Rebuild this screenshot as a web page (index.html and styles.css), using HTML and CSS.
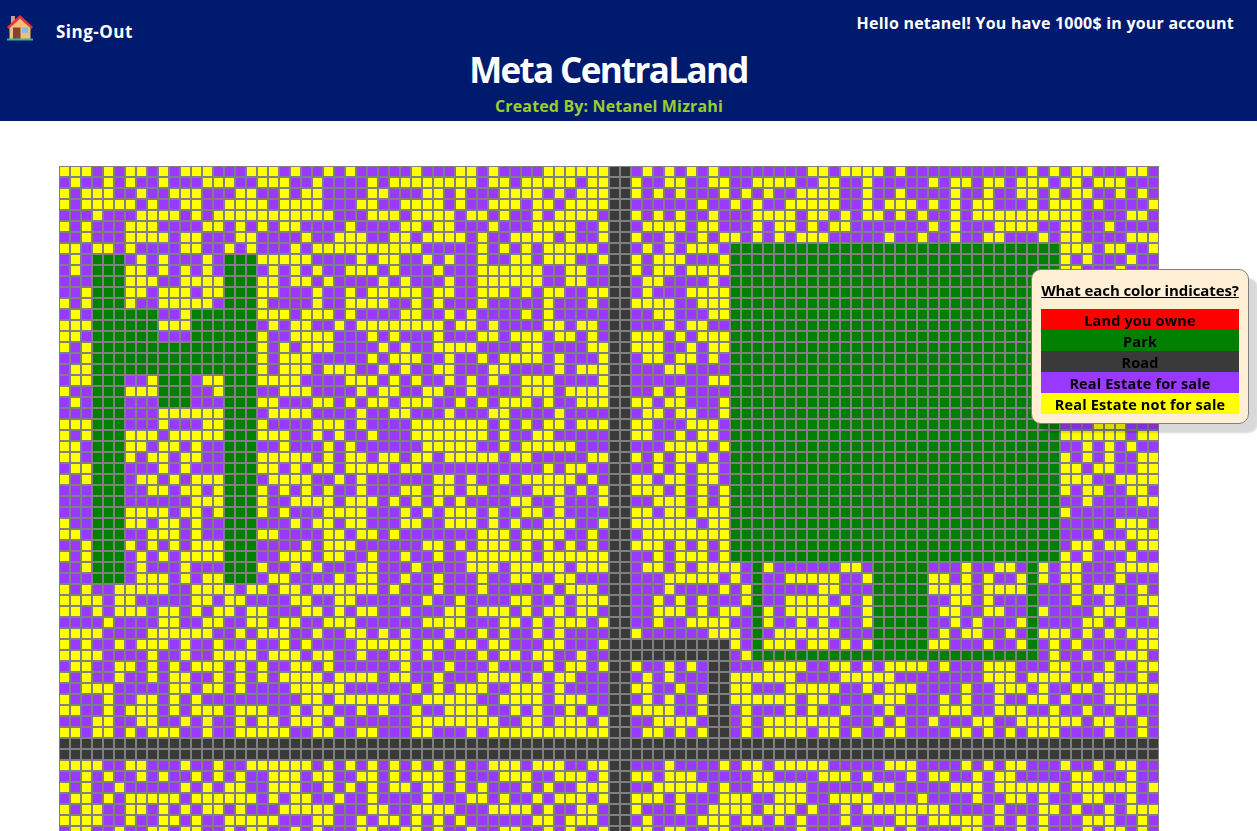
FILE: index.html
```html
<!DOCTYPE html>
<html lang="en">
<head>
<meta charset="utf-8">
<title>Meta CentraLand</title>
<link rel="stylesheet" href="styles.css">
</head>
<body>
<header class="header">
  <nav class="nav">
    <a class="home" aria-label="Home">
      <svg width="26" height="26" viewBox="0 0 26 26">
        <path d="M4 1h4v8H4z" fill="#c9a08a"/>
        <path d="M2.500 12 13 2.500l10.500 9.500v12H2.500z" fill="#f5bd78"/>
        <path d="M13 0 0 12l1.500 2L13 3.800l11.500 10.200L26 12z" fill="#e0383e"/>
        <path d="M6 12.500h7.500V24H6z" fill="#7d4533"/>
        <path d="M15 12.500h6v5.500h-6z" fill="#82bdf0"/>
        <path d="M0 23.500h26V25.500H0z" fill="#2fbf8a"/>
      </svg>
    </a>
    <a class="signout">Sing-Out</a>
    <span class="hello">Hello netanel! You have 1000$ in your account</span>
  </nav>
  <h1 class="title">Meta CentraLand</h1>
  <h2 class="author">Created By: Netanel Mizrahi</h2>
</header>
<main class="map" id="map"></main>
<aside class="legend">
  <h3 class="legend-title">What each color indicates?</h3>
  <div class="key owned">Land you owne</div>
  <div class="key park">Park</div>
  <div class="key road">Road</div>
  <div class="key sale">Real Estate for sale</div>
  <div class="key kept">Real Estate not for sale</div>
</aside>
<script src="map.js"></script>
</body>
</html>
```
FILE: styles.css
```css
body {
  margin: 0;
  height: 831px;
  overflow: hidden;
  background: #fff;
  font-family: "Open Sans", "Noto Sans", sans-serif;
}
.header {
  height: 121px;
  background: #001a6e;
  color: #fff;
  text-align: center;
}
.nav {
  display: flex;
  height: 47px;
  padding: 0 23px 0 7px;
  font-size: 17px;
  font-weight: 700;
  line-height: 24px;
}
.home { height: 26px; padding-top: 15px; }
.signout { margin-left: 23px; padding-top: 20px; letter-spacing: 0.5px; }
.hello { margin-left: auto; padding-top: 11px; font-size: 16px; letter-spacing: 0.22px; }
.title {
  width: 1217px;
  margin: 0;
  font-size: 35px;
  font-weight: 700;
  letter-spacing: -1.65px;
  line-height: 45px;
}
.author {
  width: 1218px;
  margin: 3px 0 0;
  color: #9acd32;
  font-size: 16px;
  font-weight: 700;
  letter-spacing: 0.15px;
  line-height: 22px;
}
.map {
  display: grid;
  grid-template-columns: repeat(100, 11px);
  grid-auto-rows: 11px;
  margin: 45px 0 0 59px;
}
.cell { border: 1px solid #808080; }
.owned { background: #f00; }
.park { background: #008000; }
.road { background: #3a3a3a; }
.sale { background: #9a38ff; }
.kept { background: #ff0; }
.legend {
  position: fixed;
  top: 269px;
  left: 1031px;
  box-sizing: border-box;
  width: 218px;
  height: 155px;
  padding: 9px;
  border: 1px solid #808080;
  border-radius: 10px;
  background: #ffefd5;
  box-shadow: 9px 9px 2px rgba(0, 0, 0, 0.15);
  color: #000;
  font-size: 14.5px;
  font-weight: 700;
  letter-spacing: 0.16px;
  text-align: center;
}
.legend-title {
  margin: 0 0 8px;
  font-size: 15px;
  font-weight: 700;
  letter-spacing: -0.09px;
  line-height: 22px;
  text-decoration: underline;
  white-space: nowrap;
}
.key { height: 21px; line-height: 23px; white-space: nowrap; }
```
FILE: map.js
```js
// One line per street row. P: for sale, Y: not for sale, G: park, R: road.
// "G*n" or "R*n" repeats a plot type n times.
const rows = `
YYYPYPYYPYPYYYPPPYYY PYPPYPYPPPPPYPPPYYPY PPPPYYYYYYRRPYPYPYPY PPPPPPPPYYPYYYYPYPPP PPPPPPPPYPYPYYPPPYYP
PYPPYPYPPYPPPYYYPPYY YPPYPPPPYPYYYYYYYYPY YPYYYYYPYYRRYPPYYPPY YPPYYYYPPYYPPYPPPPPY PYYPYYPYYYPYYPYYYPPP
YPYYYPPYPPYYYPPPYYPP YPYYPPPPYYPPPYYPYPPP YYYYPYPYYYRRYPYPYPPP YPYPYPPYYYYPPYPPYPPP PYPPYPPYYPYPYYPPYPYP
YPYYYYYPYPPYYPPYYYYP YYYYPPPYYPPYYYYPYPPY YYPYYPYYYYRRPPPPPPYP PYPYPPYYYYYPPYPYYYPY PYPYYPPPYPYYYPYPPPPY
PPPYPPPYYYYPYPYYYYYY YYYYYPPPYYYPYYYYPYYP YPPYPYYYYPRRYPYPYPPY PPPYYYYPYYPYPYYPYPYP PYPYYYYYYYYYYPPPPYYP
YPYPPPYYYPPPPYYPYPYP YYPPPPYPPPPYYPYYPPPY PPPYYYYPPYRRPYYYYPYY PPPYPYYPYPYYPPPPPPPY PYPPPYYYYPPYYPPYPPPP
PPYPPPYYYYPYYPPPYYPP PPYPPYYYPPYYPYYYYPYP PYYYYPYPPYRRYPPYPPYP YYPYPYPYYYPPPPPYPPYP PYPPYYPPPYPYYPPPPYYY
YYPYYPYPPPPYYPPYPYPP PYPYYYYYYYYYYPPPPPYP YPYPYYYYYPRRPYPYPYYY PG*19 G*11YYYPYYPPY
PYPGGGPYPYPPPYPGGGYY YYYPPPPYPYYPPYPYPPYP PYYPYYYPPYRRYPYYYPPP YG*19 G*11YPYPPPYPP
PYPGGGYYPYPYPYPGGGPY PYPYPPYYYPYPPPYPPPYY YYYYPPYYPPRRYPYYPYYY YG*19 G*11YYPPPYPPP
PPPGGGYYYPPYYYYGGGYY PYYPYPPPPYPYPPPYPPYY YYYYPPYYPPRRPYYPPPPY PG*19 G*11YPYPPYYPY
PPYGGGYYPYYYPYYGGGYY PPPYPPYPYYYYYPYYPPYY YPYPYYPPYYRRPYPPPYYY YG*19 G*11PYYPYPPYP
YPYGGGYPPYYYYYPGGGYP PPPYPPYYYYPPYPYPPPYP PPPPYPPPYPRRYYYYPPYY YG*19 G*11YYPPYPYPY
PYPG*6PPYG*6YY YPYYYPYPPPPYYPPYPYPP PPYPYPPPPPRRPPYYPPPY YG*19 G*11PYPYPYYPY
YYYG*6YYYG*6PY PYYPPYPYYYYYYYYPYYPY PPPPYYPYYPRRPPPYPYYP PG*19 G*11YPYPPYPPY
YYPG*6PPPG*6YP PYYYYPPPYPYPPPYPPPYY PYYYPYYPYPRRYYYPYPYY YG*19 G*11PYYPYPPYP
YPYG*15YP YPYYYPPPPYPYPPYYYYPP PPYYPPPPYYRRYYYPPYPY YG*19 G*11YYPPYPYPY
PPYG*15YP YYYPPPPPYPYYYPPYPPYP YYYYPYPPPYRRPYYPYYPY PG*19 G*11PPYYPYPYP
PYYG*15YP YYYPYYYPPYPYPPYYPPPY YPPPPYPYYYRRPPPYYPPP PG*19 G*11YPPYPYYPY
PYYGGGPPYGGGPYYGGGYY YYPPPPYYYPYPYPPYPYPY PPYYYPPPPYRRPPPPPPPY YG*19 G*11PYPPYYPYP
YPPGGGYYYGGGPPYGGGPP YYYPPPPYPYYPPYYPPYPP PPYYYPYYYYRRPPYPYPPP PG*19 G*11YYPPYPYPY
PYPGGGPPPGGGPPPGGGYY PPPYYPYPYYPYYYPPYPYP YYYPYPPYYYRRYYPYYPPP YG*19 G*11PYYPYPPYP
PPPGGGPPPYYYYYYGGGPY YYYPPPPYPPYYPPPYPPPY YPPPPYPPPPRRPYYPYYPP YG*19 G*11YPYPPYYPY
YYYGGGPPPYPPPYYGGGYP PPPYYYPYPPPPYYYYYYYP YPYPYYPYYYRRYYPPPYYY PG*19 G*11PPPYYYPPP
YPYGGGYYYPYYYYYGGGYY YPPYPYPPYPPPYYYYYYYP YPPYYPPPPPRRYYPPYPYY PG*19 G*11YYYYYYPYY
YYPGGGYYPYYPYPPGGGPP YPPPYPYPPPPPPYYYYYPP YPYYYYYPPPRRPPPYYYYP YG*19 G*11PPYPYPYPP
YYPGGGYPYYPYYPPGGGYY YYYPYPYYPYYPYYPYYYYY PYYPPPPPYYRRYPYPYYPY PG*19 G*11YPYPYPPYY
PYYGGGPPPYPYPPPGGGYY PYPYYPYYYYPYYPPPPPPP PPPPYPYYPPRRPPYPYPYY PG*19 G*11YYPYYPPYY
YPYGGGPYYPYPYYYGGGPY YYYPPYPYPPPPPPYYPYPP YPYYYYYPYPRRYYPYYPYY PG*19 G*11YYYPPYYYY
PPPGGGPPYYPYYPYGGGYP YPYPYPPYPPPYYPYYPYYP PPPYYYPYPYRRYYYPYPYP YG*19 G*11YPYYPPYYP
PPPGGGPPPPPPYYYGGGYP PYYYYPYYYPYPYPYPYPPP PYYPPYPPPYRRPPYYYPYP YG*19 G*11PPYPPPPYY
PPPGGGYYYYPYYPYGGGYP YPPPYYYYPPPYPYPYYYPY PPYYPYPPPPRRYYPYYPYY YG*19 G*11YPPPPPPPP
YPPGGGYYPYYPYPPGGGPP PYPYYPYYPPPYYPPYYYPY PYPPYYYPPYRRYYYYYYPY YG*19 G*11PPPPPYYYP
YYPGGGPPYYYPYPPGGGYY PPPPYYPYYPYPPPPPPPYY YPYYYYPPYPRRPYYYYYYY YG*19 G*11PPPYPPYYY
PPYGGGYPYPYPYYYGGGPP PPYPYYYPPPPPPYYPYPYY YPYPYPYPYPRRYYYPYPYP YG*19 G*11PYYPYYPYY
YPYGGGPYPYPYYYYGGGPP YYYPYYPPYPPYPPYPPYYY YYYPYYYYYYRRPPYPYYYP YG*19 G*11YPYPPPYPP
PPYGGGPYPPPYPPPGGGYP PYPYPPPYYPPPYPPPPYYY PYYYYYPYYYRRPYYPYPYY YYPGYPPPPPPYYPGGGGGP PPYPPYYPGYPYYPPPYYYY
PPPGGGPYYYPYPYYGGGPY YPPPPYPYYPPYPPYPPPYP PYYPPYYPPPRRPPPYYYYY PYPGPPYYYYYPPYGGGGGY YPYPYPPYGYPYYPPPYPPP
YPYPPYYYYYPPYYYYPYYP YYPYYYYYYPYPPPYPPPYP PPPPYPYYYPRRPPPYPPPP YPYGPPPPPYYPPPGGGGGY YYYPYYYYGPPPYPYYPPYP
YYYYPYYPPPPPYYPYYPPP PYYPPYYPPPPPPYPPYPPP PYYPPYPYYYRRPPYPYPYP PPYGPPYYYYPYPYGGGGGP PYYPYPPPGPPPYPPYPPYY
YYPYPYYYPYYPYPYYPYYP PPYYPYPYYPPYPPPYYPYY YPYPYYPYYPRRPPYYYPYP YYPGYPYYYYYPPYGGGGGP YYPPYYPPGYPPPPYYYPPY
PPPPYPPPPYYPPYYPPYYP YYPPYYYPPPPPPYYYYPPP YYPYPYYYPYRRPPYPPYYY YPPGYPPYPYPPPYGGGGGP PYPYPPPYGPPPPYYPYPPP
YYYYPPPPYYYYYYPPYPYY YPPYPPYYPYPYPPPYPPYP YPPYPYPPPPRRYPPPPPPY YYPGPYYYYYYPPPGGGGGP YPYYPPYPGYYYPYPYPYYY
YPYPPYPYYYPYPPYPPYPP YPYPPPPYYYYYPYYPYYPY YPPPYYPPPYR*10 RYPGYYYPYYPYPYGGGGGY YPPPYPPYGPYPYPPPPPYY
YYYYPPPPYPPYPPYYYYPY YYPYYPPYPPYYPYPPPPYP YYPYYPPYPPR*10 RPYG*17 G*9PYPPYPPYYYP
PYYPPYYPYPYPYYYPYPYP PYYPYPPPPPPYPPPYPPPY PPPPYPYYPYRRYPPYPYPR RPPPYYYYPPYYPYPYYYYP YPPPYYYPPPYYPPPYPPYY
YPYPPYPPYPYYPPYPYPYP YYYYPYYYYPYYPPYPPPYY YYPYPYYPPPRRPYPYPPPR RYYYYYYPPPPYYYYYPPPP PPPPYYYPYYYYPPYYPPYP
PPYYYPPPPPYYPYYPYPPP PYYYYYPPPPPPYPYPYYYP PYYYPYPPPPRRYYPPYPPR RYYPPPYYYYYPPYPYYYPP PPYPPYYYPYPPYYPYYYYY
YPPPYPPYYPYPYPPPPPPP PPYYPYYYYYYPPYYYYYPP YYYYPYYYPPRRPYPYPPYR RYYYYYYPYYPPPPYYYPPP YPYPPYPPYYPYPPPYYYPP
YYPPYPYYYPYPYYYPYYYP PYPYYPPYPYPPYPPYYYYP PYPYPPYPYPRRYYYYPPYR RPYPPPYPYPPYPPPYPPPP YYYPPYYYPPYPPYPPYYPP
PPPYYPPYYPPYPYPPYPYY PYYYPYPPPPPPYYYYYYYY PPYYPYYYPYRRPPYYYYPR RPYPYYYYYYYPPPYPYPPY PPPYYPPYYYYYYPYYPPYP
YYPYYPYPYYYPPYPPYYYY YPPYYPPYYPPPYYPPPYPY YYYYYYYYYYRRPYYPYPYR RPYPYYYYPYYPYPPYYPPP PYYPYPYPYYYPPPPYPPYP
R*100
R*100
YYYYPPYYPPPYPPYPPYYY YYYPYPYPYPYPYPYPYPPY YYPYYYPPYYRRPPPYPPPP YPYYPYYYYYPPPPPYYYPP PPYPYPYYPPPYPPYPYYPP
PPYPYPPYPYPPYPYPYPPY YYPYYPPYYPYPYYYPYPPP YYYPPYYYPYRRYYPYYYPP PPPYYPPPPYYYPYPPPYPY YPPYPYYPPPPPYYPPPYPP
YPYPPYPPPPPYPYPYYPPY YYPPYPYPYPYYPYYPYPYP PPYPYPPYYYRRPPYYYYYP YPPYYYYYPPPPPPYYPPPP PYYYPYYYYYYPYYYYYYPY
PYYPYPYYYYYPYYYYYYPY PYYPPYPPYPPPPYPPPYYP YPPYPYYYPYRRYYYPYPPP YYYPPYYYPPYYYYPPPPYP PPPYPPYYPYPPPYYPPYPP
YPYYPPYYPYPYPYYPYPPP YYYYYPPPYYPPYYYYPPPY YYYPYPPYYPRRYPPPYPPY YYYPYYYPYPPYPYYYYYYY YPPPPYPPPYYPYPPYPYYY
YYYYPPYPPYYPYPPYYYYY PPPYYPPYPYYPYPYPYPPP PPPYYPYYYPRRPYPPPPYY YPYYPYPYPPPYPPPPYYPY YYYYPYPYPYPPPYYYPPYP
PYYPPYPPYYPYYPPYPYYP PYPYPPPYYPPYYPYPPYPP YYPPYPYPPYRRYYPYYPPY YPPPPPPYPPPPYPYYPYPP PPYYPPPYPYPPPYPYYPYP
`.trim().split('\n');

const kinds = { P: 'sale', Y: 'kept', G: 'park', R: 'road' };
const map = document.getElementById('map');
for (const row of rows) {
  const plots = row.replace(/ /g, '').replace(/([GR])\*(\d+)/g, (m, kind, n) => kind.repeat(n));
  for (const plot of plots) {
    const cell = document.createElement('div');
    cell.className = 'cell ' + kinds[plot];
    map.append(cell);
  }
}
```
